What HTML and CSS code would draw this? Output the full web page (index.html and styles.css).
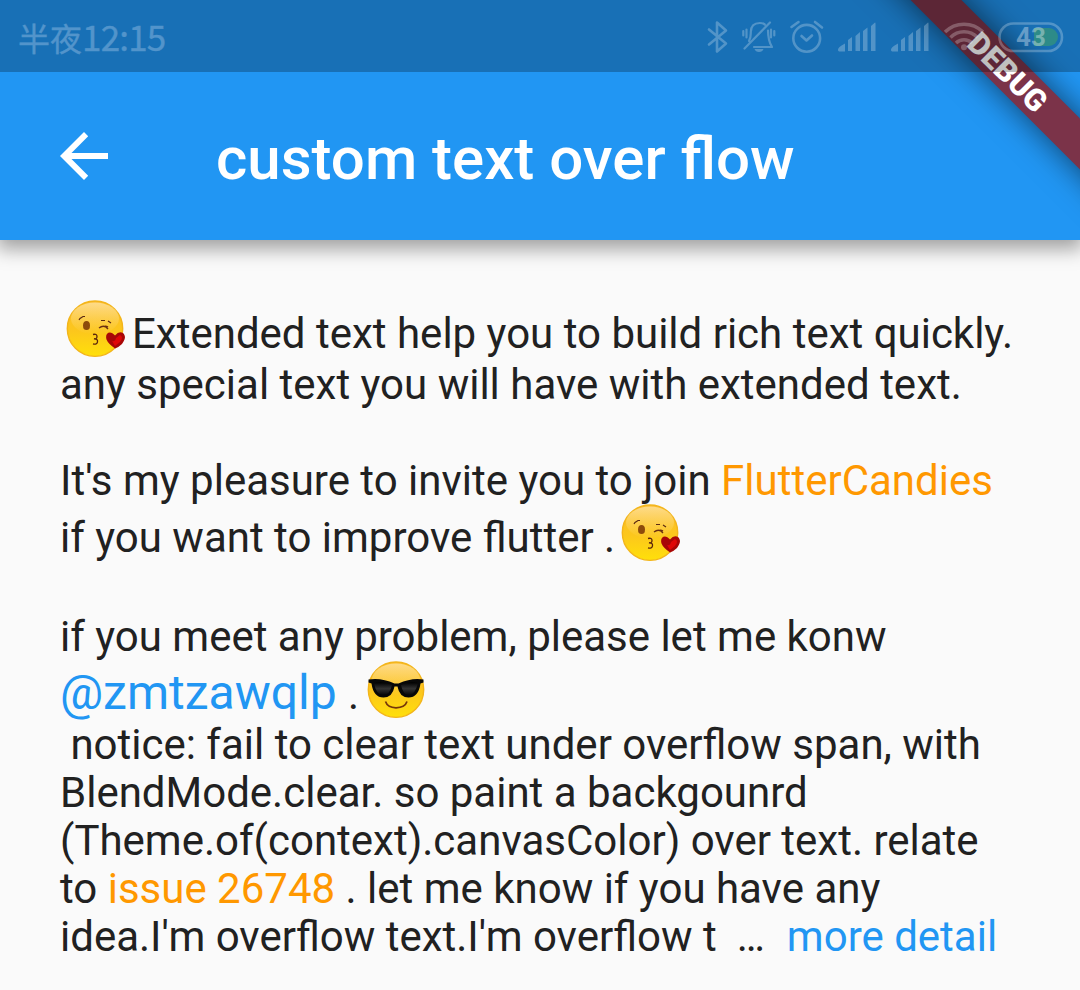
FILE: index.html
```html
<!DOCTYPE html>
<html lang="en">
<head>
<meta charset="utf-8">
<title>custom text over flow</title>
<link rel="stylesheet" href="styles.css">
</head>
<body>
<svg class="defs" width="0" height="0" aria-hidden="true">
  <defs>
    <linearGradient id="face" x1="0" y1="0" x2="0" y2="1">
      <stop offset="0" stop-color="#fbbb2c"/><stop offset=".55" stop-color="#fcc71c"/><stop offset="1" stop-color="#ffe00a"/>
    </linearGradient>
    <linearGradient id="gloss" x1="0" y1="0" x2="0" y2="1">
      <stop offset="0" stop-color="#ffe6a8" stop-opacity=".75"/><stop offset="1" stop-color="#ffe081" stop-opacity="0"/>
    </linearGradient>
    <linearGradient id="lens" x1="0" y1="0" x2="0" y2="1">
      <stop offset="0" stop-color="#000"/><stop offset=".5" stop-color="#333"/><stop offset="1" stop-color="#080808"/>
    </linearGradient>
    <symbol id="head" viewBox="0 0 60 60">
      <circle cx="29" cy="28.7" r="27.7" fill="url(#face)" stroke="#f3b51b" stroke-width="1.4"/>
      <ellipse cx="29" cy="18.5" rx="24" ry="16" fill="url(#gloss)"/>
    </symbol>
    <symbol id="kiss" viewBox="0 0 60 60">
      <use href="#head" width="60" height="60"/>
      <path d="M13 20l1-1.500 3-2h2M35 20.500h4M42 21l3 2" fill="none" stroke="#5c2a12" stroke-width="1.2"/>
      <ellipse cx="20.500" cy="25.500" rx="3.500" ry="4.600" fill="#8d4b0b"/>
      <path d="M33 28q5-4 9 1M37 26.500q3-1 5 .5" fill="none" stroke="#6b3010" stroke-width="1.3"/>
      <path d="M27 34.500q4-1 4 2t-3 2.300q4 0 3.500 3t-4.500 2" fill="none" stroke="#5a260d" stroke-width="1.3"/>
      <path d="M49 48.500q-7-5-8.500-9c-2-7 4-9.500 8.500-4q4-5 8-2.500c4 4 1 8-1 11q-3 3-7 4.500z" fill="#a80707"/>
      <path d="M49 46l-3-5q3 1 4-3l4-3q4 2 0 7z" fill="#df0808"/>
    </symbol>
    <symbol id="signal" viewBox="0 0 40 32">
      <path d="M1 29.500q-1-3 7-7v8H2zM11 30v-11l4-3v14zM18.500 30v-15l4.500-4v19zM26 30v-20l4.500-3.500V30zM34 30V5l4-3.500q.5 0 .5 1V30z"/>
    </symbol>
  </defs>
</svg>
<div class="screen">
  <header class="appbar">
    <svg class="back" width="48" height="48" viewBox="0 0 48 48"><path d="M48 21H11.500L28.200 4.200 24 0 0 24l24 24 4.200-4.200L11.500 27H48z"/></svg>
    <h1 class="title">custom text over flow</h1>
  </header>
  <main class="content">
    <div class="line line-first"><svg class="emoji emoji-lead" viewBox="0 0 60 60"><use href="#kiss"/></svg><span>Extended text help you to build rich text quickly.</span></div>
    <div class="line">any special text you will have with extended text.</div>
    <div class="line"></div>
    <div class="line">It's my pleasure to invite you to join <span class="candies">FlutterCandies</span></div>
    <div class="line line-invite"><span>if you want to improve flutter .</span><svg class="emoji emoji-mid" viewBox="0 0 60 60"><use href="#kiss"/></svg></div>
    <div class="line line-gap"></div>
    <div class="line">if you meet any problem, please let me konw</div>
    <div class="line line-mention"><span><span class="mention">@zmtzawqlp</span> .</span><svg class="emoji emoji-cool" viewBox="0 0 60 60">
      <use href="#head"/>
      <path d="M1.500 18.500q13-2 26 4h4q13-6 25-4v3l-3 1q-2 14-12 14-9 0-11-11h-3q-2 11-11 11-10 0-12-14l-3-1z" fill="#080808"/>
      <path d="M7 22q10-2 18 2-2 10-9 10T7 22zM51 22q-10-2-17 2 2 10 8 10t9-12z" fill="url(#lens)"/>
      <path d="M18.500 40.500q2 6 10.500 6.300 9-.3 11-6.300" fill="none" stroke="#75360b" stroke-width="1.700"/>
    </svg></div>
    <div class="line"> notice: fail to clear text under overflow span, with</div>
    <div class="line">BlendMode.clear. so paint a backgounrd</div>
    <div class="line">(Theme.of(context).canvasColor) over text. relate</div>
    <div class="line">to <span class="issue">issue 26748</span> . let me know if you have any</div>
    <div class="line line-last"><span>idea.I'm overflow text.I'm overflow t</span><span class="dots">…</span><span class="more">more detail</span></div>
  </main>
  <div class="debug">DEBUG</div>
  <div class="status">
    <div class="clock"><span class="midnight">半夜</span><span class="time">12:15</span></div>
    <div class="icons">
      <svg class="icon" width="24" height="36" viewBox="705 19 24 36"><path class="stroke" d="M709 29.500l17 14-9 8v-29l9 8-17 14"/></svg>
      <svg class="icon bell" width="36" height="36" viewBox="741 19 36 36"><path class="stroke thin" d="M744.500 48.500L770 22.500M749 41q2-4 1.800-9 .2-9 9-9 3 0 5 1.500M768 30.500q0 10 4 16.500h-18M743.300 31v4.500M746.500 29.500v8M771 29.500v8M774.300 31v4.500"/><path class="fill" d="M754.500 49h9q-1 3-4.500 3t-4.500-3z"/></svg>
      <svg class="icon alarm" width="36" height="36" viewBox="789 19 36 36"><circle class="stroke" cx="806.700" cy="38.300" r="13.400"/><path class="stroke" d="M801.500 36l5 4.500 5.500-5M791.500 27l7-5M815 22l7 5.500"/></svg>
      <svg class="signal" width="40" height="32"><use href="#signal"/></svg>
      <svg class="signal second" width="40" height="32"><use href="#signal"/></svg>
      <svg class="icon wifi" width="44" height="36" viewBox="942 19 44 36"><path class="stroke wide" d="M945 32a27 27 0 0 1 38 0M950.500 37.500a19 19 0 0 1 27 0M956 43a11.500 11.500 0 0 1 16 0"/><circle class="fill" cx="964" cy="47.300" r="3"/></svg>
      <svg class="battery" width="68" height="32" viewBox="997 20 68 32"><rect class="stroke" x="999.500" y="22.500" width="62.500" height="27.500" rx="13.750"/><path class="charge" d="M1034 27h15a9 9 0 0 1 0 18h-15z"/><text class="level" x="1016" y="44.500">43</text></svg>
    </div>
  </div>
</div>
</body>
</html>
```

FILE: styles.css
```css
body { margin: 0; background: #fafafa; }
.defs { position: absolute; }
.screen { position: relative; width: 1080px; height: 990px; overflow: hidden; background: #fafafa; font-family: Roboto, sans-serif; color: #212121; }

.appbar { box-sizing: border-box; height: 240px; padding: 72px 0 0 60px; display: flex; align-items: center; background: #2196f3; box-shadow: 0 6px 18px 3px rgba(0, 0, 0, .36); }
.back { fill: #fff; flex: none; }
.title { margin: 5px 0 0 108px; font-size: 60px; line-height: 70px; font-weight: 500; color: #fff; white-space: nowrap; }

.content { padding: 60px 0 0 60px; font-size: 42px; }
.line { height: 48px; line-height: 48px; display: block; white-space: pre; }
.line-first, .line-invite, .line-mention, .line-last { display: flex; }
.line-first { height: 51px; padding-top: 10px; }
.line-invite { padding-top: 9px; }
.line-gap { height: 51px; }
.line-mention { height: 52px; padding-top: 8px; }
.emoji { width: 60px; height: 60px; flex: none; }
.emoji-lead { margin: -10px 6px 0 6px; }
.emoji-mid { margin: -10px 0 0 6px; }
.emoji-cool { margin: -8px 0 0 8px; }
.mention { margin-right: 1px; font-size: 48px; line-height: 48px; color: #2196f3; }
.candies, .issue { color: #ff9800; }
.more { color: #2196f3; margin-left: 22px; }
.dots { margin-left: 20px; }

.debug { position: absolute; left: 808px; top: 54px; width: 400px; height: 36px; transform: rotate(45deg); background: #7b3349; box-shadow: 0 0 32px rgba(0, 0, 0, .58); color: #fff; font-size: 30.6px; font-weight: 900; line-height: 37px; text-align: center; }

.status { position: absolute; left: 0; top: 0; box-sizing: border-box; width: 1080px; height: 72px; padding: 0 15px 0 18px; display: flex; justify-content: space-between; align-items: center; background: rgba(0, 0, 0, .25); }
.clock { display: flex; align-items: baseline; font-family: "Noto Sans CJK SC", sans-serif; font-size: 35px; line-height: 48px; color: #5294cb; -webkit-text-stroke: .4px #5294cb; }
.midnight { font-size: 32px; }
.time { letter-spacing: -.8px; }
.icons { display: flex; align-items: center; padding-top: 2px; }
.stroke { fill: none; stroke: rgba(255, 255, 255, .25); stroke-width: 2.6; stroke-linecap: round; stroke-linejoin: round; }
.thin { stroke-width: 2.2; }
.wide { stroke-width: 3.5; stroke-linecap: butt; }
.fill, .signal { fill: rgba(255, 255, 255, .25); }
.bell { margin-left: 12px; }
.alarm { margin-left: 12px; }
.signal { margin-left: 12px; }
.second { margin-left: 13px; }
.wifi { margin-left: 12px; }
.battery { margin-left: 11px; }
.charge { fill: #2d8b88; }
.level { fill: rgba(255, 255, 255, .35); font: 700 26px Roboto, sans-serif; }
```
